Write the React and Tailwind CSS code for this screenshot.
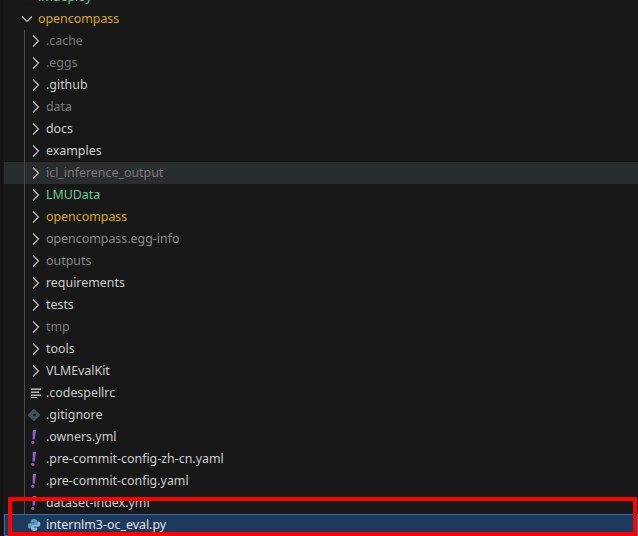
import React from 'react'

const folders = [
  ['.cache', 'text-[#7a7a7a]'],
  ['.eggs', 'text-[#7a7a7a]'],
  ['.github', 'text-[#cccccc]'],
  ['data', 'text-[#7a7a7a]'],
  ['docs', 'text-[#cccccc]'],
  ['examples', 'text-[#cccccc]'],
  ['icl_inference_output', 'text-[#7a7a7a]', 'hover'],
  ['LMUData', 'text-[#73c991]'],
  ['opencompass', 'text-[#d7a72a]'],
  ['opencompass.egg-info', 'text-[#8a8a8a]'],
  ['outputs', 'text-[#8a8a8a]'],
  ['requirements', 'text-[#cccccc]'],
  ['tests', 'text-[#cccccc]'],
  ['tmp', 'text-[#7a7a7a]'],
  ['tools', 'text-[#cccccc]'],
  ['VLMEvalKit', 'text-[#cccccc]'],
]

const Chevron = ({ down }) => (
  <svg width="16" height="16" viewBox="0 0 16 16" fill="none" stroke="#c5c5c5" strokeWidth="1.1" className="shrink-0">
    {down ? <path d="M3 5.5l5 5 5-5" /> : <path d="M5 2.500l5.500 5.500-5.500 5.500" />}
  </svg>
)

const LinesIcon = () => (
  <svg width="16" height="16" viewBox="0 0 16 16" fill="#c5c5c5" className="shrink-0">
    <rect x="3" y="3.500" width="10" height="1.400" />
    <rect x="3" y="6.500" width="8" height="1.400" />
    <rect x="3" y="9.500" width="10" height="1.400" />
    <rect x="3" y="12" width="6" height="1" />
  </svg>
)

const GitIcon = () => (
  <svg width="16" height="16" viewBox="2 0 16 16" className="shrink-0">
    <path d="M7 2.500a1.400 1.400 0 0 1 2 0l4.500 4.500a1.400 1.400 0 0 1 0 2L9 13.500a1.400 1.400 0 0 1-2 0L2.500 9a1.400 1.400 0 0 1 0-2z" fill="#41535b" />
    <circle cx="8.600" cy="8" r="1.500" fill="#1b1b1b" />
  </svg>
)

const Bang = () => (
  <svg width="16" height="16" viewBox="2 0 16 16" fill="#8a63c8" className="shrink-0">
    <path d="M6.800 1h3.300L8.700 10.500H6.600z" />
    <circle cx="6.800" cy="13.300" r="1.600" />
  </svg>
)

const PyIcon = () => (
  <svg width="16" height="16" viewBox="2 0 16 16" className="shrink-0">
    <path d="M8 2c-2.800 0-3.200 1.100-3.200 2.200v1.400h3.400v.7H3.600C2.300 6.300 1.600 7.300 1.600 8.800s.7 2.800 2 2.800h1.200V9.800c0-1 .8-1.800 1.800-1.800h2.900c.8 0 1.500-.7 1.500-1.500v-2.300C11 3 10 2 8 2z" fill="#5f9dc0" />
    <path d="M8 14c2.800 0 3.200-1.100 3.200-2.200v-1.400H7.800v-.7h4.600c1.300 0 2-1 2-2.500s-.7-2.800-2-2.800h-1.200v1.800c0 1-.8 1.800-1.800 1.800H6.500c-.8 0-1.500.7-1.500 1.500v2.300C5 13 6 14 8 14z" fill="#83b9d4" />
  </svg>
)

const Row = ({ icon, children, className = '', pad = 'pl-[24px]', gap = 'ml-[2px]' }) => (
  <div className={`flex h-[22px] items-center ${pad} ${className}`}>
    {icon}
    <span className={`${gap} whitespace-nowrap`}>{children}</span>
  </div>
)

const files = [
  [<LinesIcon />, '.codespellrc'],
  [<GitIcon />, '.gitignore'],
  [<Bang />, '.owners.yml'],
  [<Bang />, '.pre-commit-config-zh-cn.yaml'],
  [<Bang />, '.pre-commit-config.yaml'],
  [<Bang />, 'dataset-index.yml'],
]

export default function App() {
  return (
    <div className="relative h-[536px] w-[638px] overflow-hidden bg-[#181818] font-['Noto_Sans',sans-serif] text-[12.4px] text-[#cccccc]">
      <div className="absolute bottom-0 left-0 top-0 w-[3px] bg-[#141414]" />
      <div className="-mt-[14px] pl-[4px]">
        <Row pad="pl-[15px]" gap="ml-[3px]" className="text-[#73c991]" icon={<Chevron down />}>lmdeploy</Row>
        <Row pad="pl-[15px]" gap="ml-[3px]" className="text-[#d7a72a]" icon={<Chevron down />}>opencompass</Row>
        <div className="relative">
          <div className="absolute bottom-[22px] left-[20px] top-0 w-px bg-[#4a4a4a]" />
          {folders.map(([name, color, hover]) => (
            <Row key={name} className={`${color} ${hover ? 'bg-[#2a2d2e]' : ''}`} icon={<Chevron />}>{name}</Row>
          ))}
          {files.map(([icon, name]) => (
            <Row key={name} icon={icon}>{name}</Row>
          ))}
          <Row icon={<PyIcon />} className="border border-[#3f6aa8] bg-[#1c3a5e] text-[#e4e4e4]" pad="pl-[23px]">internlm3-oc_eval.py</Row>
        </div>
      </div>
      <div className="absolute left-[8px] top-[497px] h-[39px] w-[629px] rounded-[1px] border-[4px] border-[#fe0000]" />
    </div>
  )
}
